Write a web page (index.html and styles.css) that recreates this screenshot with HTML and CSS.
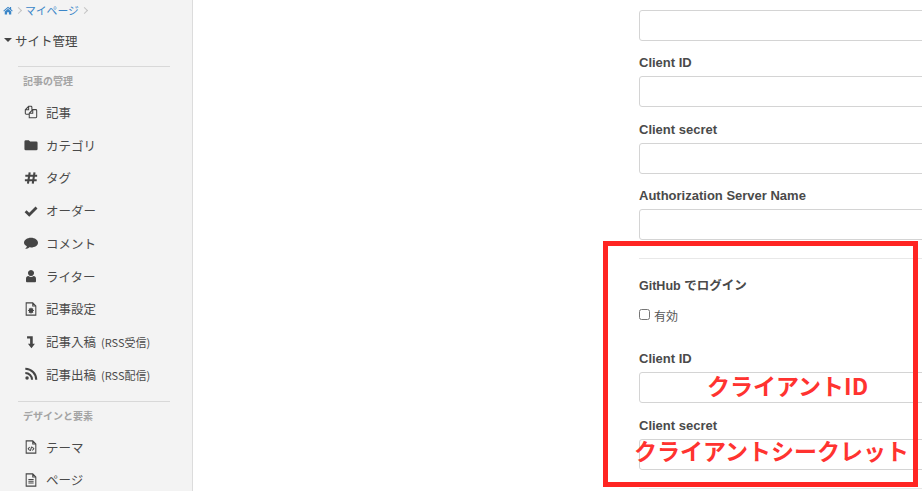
FILE: index.html
```html
<!DOCTYPE html>
<html lang="ja">
<head>
  <meta charset="UTF-8" />
  <title>サイト管理</title>
  <link rel="stylesheet" href="styles.css">
</head>
<body>

  <div class="layout">
    <aside class="sidebar">
      <div class="crumbs">
        <svg class="home" viewBox="0 0 16 14"><path d="M8 1 L0.5 7.2 L1.5 8.4 L8 3 L14.500 8.400 L15.500 7.200 L13 5.100 V1.500 H11 V3.400 Z M2.800 8.600 V13.500 H6.500 V9.800 H9.500 V13.500 H13.200 V8.600 L8 4.300 Z"/></svg>
        <span class="sep"></span>
        <a class="crumb">マイページ</a>
        <span class="sep"></span>
      </div>

      <div class="site-title"><span class="caret"></span>サイト管理</div>

      <div class="nav-group">
        <h4>記事の管理</h4>
        <ul>
          <li>
            <svg class="icon" viewBox="0 0 16 16"><path class="line" d="M6 10.500 H2.500 a1 1 0 0 1 -1 -1 V5.500 L5.300 1.500 H8 a1 1 0 0 1 1 1 V5.300 M6 14.500 V9.500 L10 5.300 H13.500 a1 1 0 0 1 1 1 V13.500 a1 1 0 0 1 -1 1 Z M5.300 1.500 V5.500 H1.500 M10 5.300 V9.500 H6"/></svg>
            記事
          </li>
          <li>
            <svg class="icon" viewBox="0 0 16 16"><path d="M0.500 4 a1.500 1.500 0 0 1 1.500 -1.500 H5.500 L7 4 H14 A1.500 1.500 0 0 1 15.500 5.500 V12.500 a1.500 1.500 0 0 1 -1.500 1.500 H2 A1.500 1.500 0 0 1 0.500 12.500 Z"/></svg>
            カテゴリ
          </li>
          <li>
            <svg class="icon" viewBox="0 0 16 16"><path class="bold" d="M6.500 1.500 L4.500 14.500 M12 1.500 L10 14.500 M1.500 5.500 H15 M1 10.500 H14.500"/></svg>
            タグ
          </li>
          <li>
            <svg class="icon" viewBox="0 0 16 16"><path class="heavy" d="M1.800 8.300 L6 12.300 L14.300 4"/></svg>
            オーダー
          </li>
          <li>
            <svg class="icon" viewBox="0 0 16 16"><path d="M8 2 C12.400 2 16 4.500 16 7.600 C16 10.700 12.400 13 8 13 C7.300 13 6.700 12.900 6.100 12.800 C5 13.900 3.300 14.600 1.300 14.700 C2.500 13.700 3.200 12.700 3.300 11.700 C1.300 10.700 0 9.300 0 7.600 C0 4.500 3.600 2 8 2 Z"/></svg>
            コメント
          </li>
          <li>
            <svg class="icon" viewBox="0 0 16 16"><path d="M8 1 a3.500 3.500 0 1 1 -0.010 0 Z M3.300 15 a1 1 0 0 1 -1 -1 V11 C2.300 9.300 3.500 8 5 8 C6 8.800 7 9.100 8 9.100 C9 9.100 10 8.800 11 8 C12.500 8 13.700 9.300 13.700 11 V14 a1 1 0 0 1 -1 1 Z"/></svg>
            ライター
          </li>
          <li>
            <svg class="icon" viewBox="0 0 16 16"><path class="line" d="M10 1 H2.500 V15 H13.500 V4.500 Z M10 1 V4.500 H13.500"/><circle class="ring" cx="8" cy="9.800" r="1.700"/><path class="line" d="M8 6.500 V13.100 M4.700 9.800 H11.300 M5.700 7.500 L10.300 12.100 M10.300 7.500 L5.700 12.100"/></svg>
            記事設定
          </li>
          <li>
            <svg class="icon" viewBox="0 0 16 16"><path d="M3.500 1.500 H10 V10 H12.500 L8.500 15 L4.500 10 H7 V4 H3.500 Z"/></svg>
            <span>記事入稿<small>(RSS受信)</small></span>
          </li>
          <li>
            <svg class="icon" viewBox="0 0 16 16"><circle cx="3.500" cy="12.500" r="2"/><path class="bold" d="M1.500 6.800 A7.700 7.700 0 0 1 9.200 14.500 M1.500 2 A12.500 12.500 0 0 1 14 14.500"/></svg>
            <span>記事出稿<small>(RSS配信)</small></span>
          </li>
        </ul>
      </div>

      <div class="nav-group">
        <h4>デザインと要素</h4>
        <ul>
          <li>
            <svg class="icon" viewBox="0 0 16 16"><path class="line" d="M10 1 H2.500 V15 H13.500 V4.500 Z M10 1 V4.500 H13.500 M6.500 8 L4.800 10 L6.500 12 M9.500 8 L11.200 10 L9.500 12 M8.700 7.500 L7.300 12.500"/></svg>
            テーマ
          </li>
          <li>
            <svg class="icon" viewBox="0 0 16 16"><path class="line" d="M10 1 H2.500 V15 H13.500 V4.500 Z M10 1 V4.500 H13.500 M5 7.500 H11 M5 9.500 H11 M5 11.500 H11"/></svg>
            ページ
          </li>
        </ul>
      </div>
    </aside>

    <main class="content">
      <form class="settings">
        <div class="field">
          <label class="field-label">ドメイン</label>
          <input type="text" />
        </div>
        <div class="field">
          <label class="field-label">Client ID</label>
          <input type="text" />
        </div>
        <div class="field">
          <label class="field-label">Client secret</label>
          <input type="text" />
        </div>
        <div class="field">
          <label class="field-label">Authorization Server Name</label>
          <input type="text" />
        </div>

        <hr />

        <div class="provider">GitHub でログイン</div>
        <label class="check"><input type="checkbox" /> 有効</label>

        <div class="field">
          <label class="field-label">Client ID</label>
          <input type="text" />
        </div>
        <div class="field">
          <label class="field-label">Client secret</label>
          <input type="text" />
        </div>

        <hr />
      </form>

      <!-- annotation drawn over the screenshot -->
      <div class="callout"></div>
      <span class="note note-id">クライアントID</span>
      <span class="note note-secret">クライアントシークレット</span>
    </main>
  </div>

</body>
</html>
```

FILE: styles.css
```css
html, body {
  height: 100%;
  overflow: hidden;
}

body {
  margin: 0;
  padding: 0;
  font-family: "Noto Sans CJK JP", "Liberation Sans", sans-serif;
  background: #ffffff;
  color: #4a4a4a;
}

.layout {
  display: flex;
  height: 491px;
  overflow: hidden;
}

.sidebar {
  width: 192px;
  flex: none;
  background: #f3f3f3;
  border-right: 1px solid #dcdcdc;
  font-size: 12.5px;
}

.crumbs {
  display: flex;
  align-items: center;
  gap: 3px;
  height: 20px;
  padding-left: 3px;
}

.home {
  width: 10px;
  height: 9px;
  fill: #3b86c8;
}

.crumb {
  margin-left: -1px;
  font-size: 10.8px;
  color: #3b86c8;
}

.sep {
  width: 4px;
  height: 4px;
  margin: 0 2px 0 0;
  border-top: 1px solid #c4c4c4;
  border-right: 1px solid #c4c4c4;
  transform: rotate(45deg);
}

.site-title {
  display: flex;
  align-items: center;
  height: 20px;
  margin-top: 10px;
  padding-left: 4px;
  color: #444444;
}

.caret {
  width: 0;
  height: 0;
  margin-right: 3px;
  border-left: 4px solid transparent;
  border-right: 4px solid transparent;
  border-top: 4px solid #444444;
}

.nav-group {
  margin: 16px 22px 0 18px;
  border-top: 1px solid #d8d8d8;
}

.nav-group + .nav-group {
  margin-top: 10px;
}

.nav-group h4 {
  margin: 0 0 0 5px;
  padding-top: 7px;
  height: 22px;
  line-height: 14px;
  font-size: 10px;
  font-weight: bold;
  color: #a4a4a4;
}

.nav-group ul {
  list-style: none;
  margin: 0;
  padding: 0;
}

.nav-group li {
  display: flex;
  align-items: center;
  gap: 8px;
  height: 32.75px;
  padding-left: 6px;
  white-space: nowrap;
  color: #4a4a4a;
}

.nav-group small {
  font-size: 11px;
  margin-left: 5px;
}

.icon {
  width: 14px;
  height: 14px;
  flex: none;
  fill: #454545;
}

.icon .line, .icon .ring {
  fill: none;
  stroke: #454545;
  stroke-width: 1.2;
}

.icon .ring {
  stroke-width: 2;
}

.icon .bold {
  fill: none;
  stroke: #454545;
  stroke-width: 2.4;
}

.icon .heavy {
  fill: none;
  stroke: #454545;
  stroke-width: 3.2;
}

.content {
  position: relative;
  flex: 1;
  min-width: 0;
}

.settings {
  margin: -11px -40px 0 446px;
}

.field {
  margin-bottom: 14.4px;
}

.field-label {
  display: block;
  height: 21px;
  line-height: 16px;
  font-size: 13px;
  font-weight: bold;
  color: #4a4a4a;
  font-family: "Liberation Sans", "Noto Sans CJK JP", sans-serif;
}

/* only the bottom of this label is still in view */
.field:first-child .field-label {
  line-height: 9px;
}

.field input {
  display: block;
  box-sizing: border-box;
  width: 100%;
  height: 31px;
  padding: 4px 8px;
  background: #ffffff;
  border: 1px solid #d4d4d4;
  border-radius: 3px;
}

.settings hr {
  height: 1px;
  margin: 18px 0 0;
  border: 0;
  background: #e8e8e8;
}

.provider {
  margin-top: 18px;
  height: 18px;
  line-height: 18px;
  font-size: 12.5px;
  font-weight: bold;
  color: #4a4a4a;
  font-family: "Liberation Sans", "Noto Sans CJK JP", sans-serif;
}

.check {
  display: flex;
  align-items: center;
  gap: 4px;
  height: 20px;
  margin: 10px 0 26px;
  font-size: 12px;
  color: #555555;
}

.check input {
  width: 11px;
  height: 11px;
  margin: 0 0 2px;
}

.callout {
  position: absolute;
  left: 410px;
  top: 241px;
  width: 305px;
  height: 236px;
  border: 5px solid #ff2522;
}

.note {
  position: absolute;
  font-family: "Noto Sans CJK JP", sans-serif;
  font-size: 23px;
  line-height: 30px;
  font-weight: bold;
  color: #ff3330;
  white-space: nowrap;
}

.note-id {
  left: 514px;
  top: 370px;
}

.note-secret {
  left: 441px;
  top: 435px;
}
```
